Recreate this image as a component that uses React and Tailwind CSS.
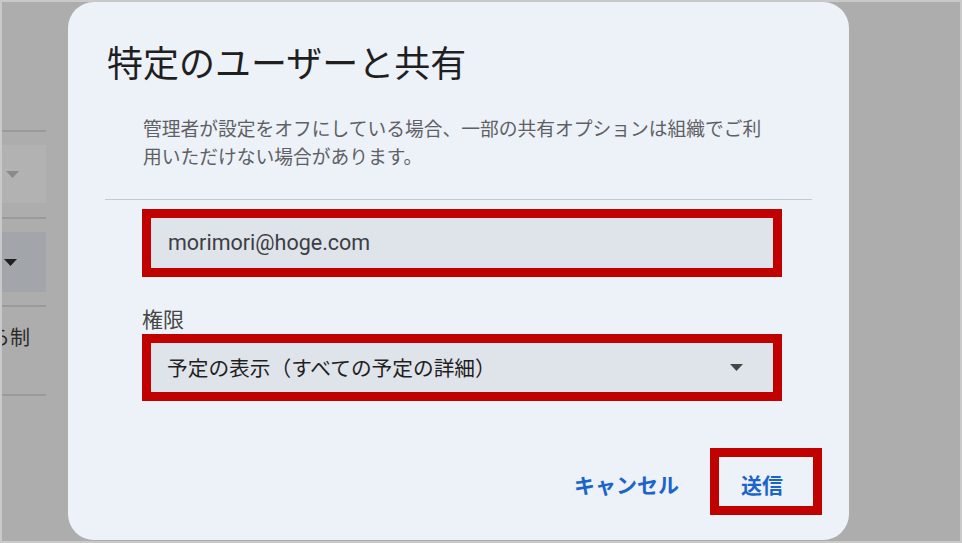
import { useState } from 'react';

const Caret = ({ className }) => (
  <svg width="13" height="7" viewBox="0 0 13 7" className={className}>
    <path d="M0 0 L13 0 L6.5 7 Z" fill="currentColor" />
  </svg>
);

const BackgroundPanel = () => (
  <div className="w-[44px] pt-[128px] flex flex-col">
    <div className="h-[2px] bg-[#9a9a9a]"></div>
    <div className="mt-[13px] h-[58px] bg-[#b2b2b2] flex items-center pl-[4px]">
      <Caret className="text-[#8a8a8a]" />
    </div>
    <div className="mt-[14px] h-[2px] bg-[#9a9a9a]"></div>
    <div className="mt-[13px] h-[60px] bg-[#a2a5aa] flex items-center pl-[2px]">
      <Caret className="text-[#202020]" />
    </div>
    <div className="mt-[13px] h-[2px] bg-[#9a9a9a]"></div>
    <div className="mt-[17px] h-[28px] leading-[28px] text-[20px] text-[#2a2a2a] whitespace-nowrap -ml-[12px]">
      ら制
    </div>
    <div className="mt-[42px] h-[2px] bg-[#9a9a9a]"></div>
  </div>
);

export default function App() {
  const [email] = useState('morimori@hoge.com');

  return (
    <div className="w-[962px] h-[543px] bg-[#adadad] border-2 border-[#c9c9c9] relative overflow-hidden font-['Roboto','Noto_Sans_CJK_JP',sans-serif]">
      <BackgroundPanel />

      <div className="absolute left-[66px] top-0 w-[781px] h-[538px] bg-[#edf1f8] rounded-[26px] flex flex-col">
        <h2 className="pt-[37px] pl-[39px] text-[36px] leading-[44px] font-normal text-[#1f1f1f] font-['Noto_Sans_CJK_JP',sans-serif]">
          特定のユーザーと共有
        </h2>

        <div className="mx-[37px] mt-[31px] pl-[38px] pb-[29px] border-b border-[#c5c9cf]">
          <p className="w-[630px] text-[18.75px] leading-[28px] text-[#5d6064] font-['Noto_Sans_CJK_JP',sans-serif]">
            管理者が設定をオフにしている場合、一部の共有オプションは組織でご利用いただけない場合があります。
          </p>
        </div>

        <div className="pl-[74px] pr-[67px] flex flex-col">
          <div className="mt-[9px] h-[68px] border-[9px] border-[#c10000] bg-[#dfe3ea] flex items-center pl-[17px]">
            <span className="text-[21.5px] text-[#3c4043]">{email}</span>
          </div>

          <label className="mt-[27px] text-[21px] leading-[28px] text-[#444746] font-['Noto_Sans_CJK_JP',sans-serif]">
            権限
          </label>

          <div className="mt-[2px] h-[67px] border-[9px] border-[#c10000] bg-[#dfe3ea] flex items-center justify-between pl-[16px] pr-[30px]">
            <span className="text-[20.7px] text-[#1f1f1f] font-['Noto_Sans_CJK_JP',sans-serif]">
              予定の表示（すべての予定の詳細）
            </span>
            <Caret className="text-[#444746]" />
          </div>
        </div>

        <div className="mt-[47px] pr-[27px] flex items-center justify-end gap-[31px] font-['Noto_Sans_CJK_JP',sans-serif]">
          <button className="text-[21px] font-bold text-[#1b64c8] pt-[6px]">キャンセル</button>
          <button className="w-[112px] h-[67px] border-[9px] border-[#c10000] flex items-center pl-[22px] pt-[6px] text-[21px] font-bold text-[#1b64c8]">
            送信
          </button>
        </div>
      </div>
    </div>
  );
}
